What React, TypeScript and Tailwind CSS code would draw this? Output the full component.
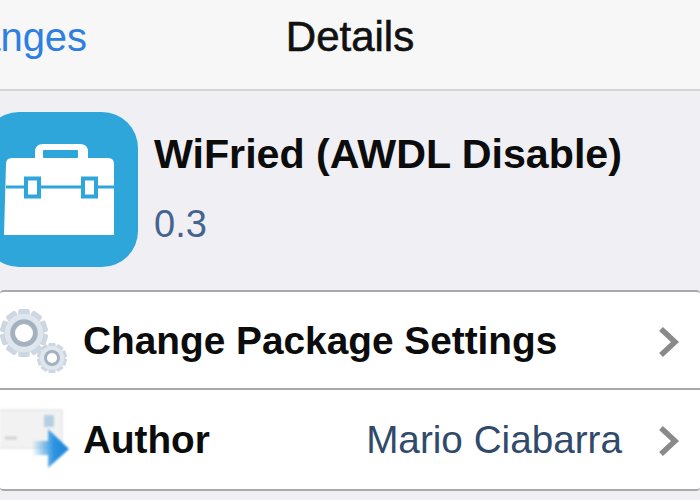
const FONT = "font-['Liberation_Sans',Arial,sans-serif]";

function ToolboxIcon() {
  return (
    <div className="ml-[-17px] flex h-[155px] w-[155px] shrink-0 items-center justify-end overflow-hidden rounded-[36px] bg-[#2fa6da]">
      <svg width="138" height="155" viewBox="0 0 138 155" className="shrink-0">
        <path d="M6 52q0-6 6-6h23v-6q0-8 8-8h37q8 0 8 8v6h20q6 0 6 6v71h-110z" fill="#fff" />
        <rect x="43" y="38" width="35" height="8" rx="1" fill="#2fa6da" />
        <path d="M6 75h110" stroke="#2fa6da" strokeWidth="3" />
        <rect x="26" y="66.5" width="13" height="18" fill="#fff" stroke="#2fa6da" strokeWidth="4" />
        <rect x="83" y="66.5" width="13" height="18" fill="#fff" stroke="#2fa6da" strokeWidth="4" />
      </svg>
    </div>
  );
}

function Gear({ cx, cy, r, hole }: { cx: number; cy: number; r: number; hole: number }) {
  const teeth = Array.from({ length: 10 }, (_, i) => i * 36);
  return (
    <g>
      {teeth.map((a) => (
        <rect
          key={a}
          x={cx - r * 0.24}
          y={cy - r}
          width={r * 0.48}
          height={r * 0.5}
          rx={r * 0.08}
          fill="#cdd7e1"
          transform={`rotate(${a} ${cx} ${cy})`}
        />
      ))}
      <circle cx={cx} cy={cy} r={r * 0.8} fill="#dfe6ed" />
      <circle cx={cx} cy={cy} r={hole + r * 0.2} fill="#a4b1bf" />
      <circle cx={cx} cy={cy} r={hole} fill="#fff" />
    </g>
  );
}

function GearsIcon() {
  return (
    <svg width="68" height="68" viewBox="0 0 68 68" className="shrink-0 blur-[0.5px]">
      <Gear cx={24} cy={25} r={24} hole={9} />
      <Gear cx={52} cy={50} r={15} hole={5} />
    </svg>
  );
}

function AuthorIcon() {
  return (
    <svg width="70" height="64" viewBox="0 0 70 64" className="shrink-0 blur-[0.8px]">
      <rect x="-2" y="1" width="64" height="38" fill="#f2f2f2" stroke="#dcdcdc" />
      <rect x="44" y="6" width="10" height="12" fill="#b7cfe4" />
      <path d="M5 29h12" stroke="#d2d2d2" strokeWidth="3" />
      <defs>
        <linearGradient id="a" x1="0" x2="1" y1="0" y2="0">
          <stop offset="0" stopColor="#2b93e0" stopOpacity="0" />
          <stop offset="0.6" stopColor="#2b93e0" />
          <stop offset="1" stopColor="#1c86dc" />
        </linearGradient>
      </defs>
      <path d="M32 32h16v-12l21 20-21 19v-13h-16z" fill="url(#a)" />
    </svg>
  );
}

function Chevron() {
  return (
    <svg width="22" height="32" viewBox="0 0 22 32" className="shrink-0">
      <path d="M3 3l14 13-14 13" fill="none" stroke="#8a8a8c" strokeWidth="5.5" />
    </svg>
  );
}

export default function App() {
  return (
    <div className={`flex h-[500px] w-[700px] flex-col overflow-hidden bg-[#efeff4] ${FONT}`}>
      <header className="grid h-[91px] shrink-0 grid-cols-3 items-center border-b-2 border-[#d3d3d6] bg-[#f7f7f8] pb-[16px]">
        <div className="ml-[-73px] whitespace-nowrap text-[40px] text-[#2f7fe0]">Changes</div>
        <div className="whitespace-nowrap text-center text-[42px] text-[#111] [-webkit-text-stroke:0.6px_#111]">Details</div>
      </header>
      <section className="flex h-[199px] shrink-0 items-center gap-[16px] pt-[1px] pb-[3px]">
        <ToolboxIcon />
        <div className="flex flex-col gap-[27px] pb-[3px]">
          <div className="whitespace-nowrap text-[41.2px] leading-[44px] font-bold text-[#0c0c0c]">WiFried (AWDL Disable)</div>
          <div className="text-[38px] leading-[42px] text-[#46638f]">0.3</div>
        </div>
      </section>
      <section className="flex h-[201px] shrink-0 flex-col rounded-[4px] border-y-2 border-[#a9a9ab] bg-white">
        <div className="flex h-[98px] items-center border-b-2 border-[#a9a9ab] pt-[3px] pr-[20px]">
          <div className="flex w-[83px] shrink-0"><GearsIcon /></div>
          <div className="flex-1 whitespace-nowrap text-[38.8px] font-bold text-[#0c0c0c]">Change Package Settings</div>
          <Chevron />
        </div>
        <div className="flex h-[99px] items-center pt-[2px] pr-[20px]">
          <div className="flex w-[83px] shrink-0"><AuthorIcon /></div>
          <div className="flex-1 text-[38.7px] font-bold text-[#0c0c0c]">Author</div>
          <div className="mr-[36px] whitespace-nowrap text-[38.7px] text-[#2f4a6b]">Mario Ciabarra</div>
          <Chevron />
        </div>
      </section>
    </div>
  );
}
